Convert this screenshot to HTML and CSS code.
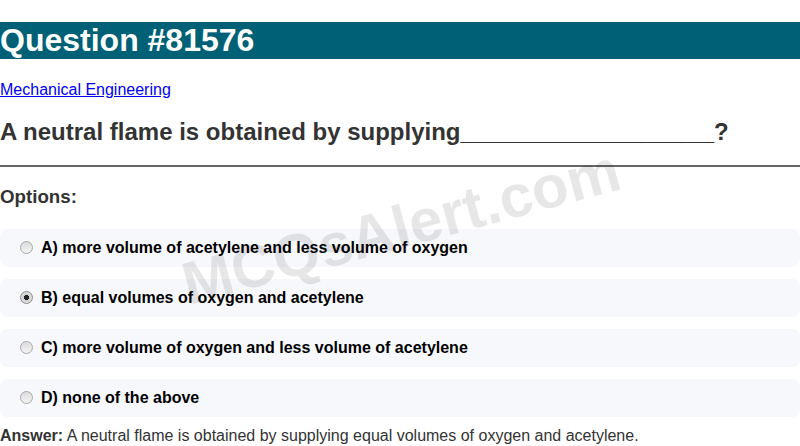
FILE: index.html
```html
<!DOCTYPE html>
<html>
<head>
<meta charset="utf-8">
<link rel="stylesheet" href="styles.css">
</head>
<body>
<h1 class="title">Question #81576</h1>
<p class="cat"><a href="#">Mechanical Engineering</a></p>
<h2 class="question">A neutral flame is obtained by supplying___________________?</h2>
<hr class="sep">
<h3 class="opts-head">Options:</h3>
<div class="options">
  <label class="option"><input class="radio" type="radio" name="q"><span>A) more volume of acetylene and less volume of oxygen</span></label>
  <label class="option"><input class="radio" type="radio" name="q" checked><span>B) equal volumes of oxygen and acetylene</span></label>
  <label class="option"><input class="radio" type="radio" name="q"><span>C) more volume of oxygen and less volume of acetylene</span></label>
  <label class="option"><input class="radio" type="radio" name="q"><span>D) none of the above</span></label>
</div>
<p class="answer"><strong>Answer:</strong> A neutral flame is obtained by supplying equal volumes of oxygen and acetylene.</p>
<div class="watermark">MCQsAlert.com</div>
</body>
</html>
```
FILE: styles.css
```css
html, body {
  margin: 0;
  padding: 0;
  background: #fff;
}
body {
  font-family: "Liberation Sans", Arial, sans-serif;
  color: #333;
  position: relative;
  overflow: hidden;
  height: 446px;
  padding-top: 1px;
  box-sizing: border-box;
}
.title {
  font-size: 32px;
  margin: 21px 0;
  background: #006076;
  color: #fff;
  font-weight: bold;
}
.cat {
  margin: 22px 0 15px;
  font-size: 16px;
}
.cat a {
  color: #0000ee;
}
.question {
  font-size: 24px;
  margin: 19px 0 18.5px;
  color: #333;
}
.sep {
  margin: 8px 0;
  border: none;
  border-top: 2px solid #666;
  height: 0;
}
.opts-head {
  font-size: 18.72px;
  margin: 19px 0 21.5px;
  color: #333;
}
.options {
  display: flex;
  flex-direction: column;
  gap: 12px;
}
.option {
  display: flex;
  align-items: center;
  height: 38px;
  box-sizing: border-box;
  background: #f7f8fc;
  border-radius: 8px;
  padding: 0 15px;
  font-size: 16px;
  font-weight: bold;
  color: #000;
}
.radio {
  appearance: none;
  -webkit-appearance: none;
  width: 13px;
  height: 13px;
  margin: 0 8px 0 5px;
  border-radius: 50%;
  border: 1px solid #a9a9a9;
  background: linear-gradient(#dcdcdc, #f4f4f4);
  box-sizing: border-box;
  position: relative;
  top: -1px;
  flex: none;
}
.radio:checked {
  background: radial-gradient(circle, #222 0, #222 2.3px, #cfcfcf 2.8px, #eeeeee 100%);
  border-color: #8a8a8a;
}
.answer {
  margin: 10px 0 0;
  font-size: 16px;
  color: #333;
}
.watermark {
  position: absolute;
  left: 401px;
  top: 227px;
  transform: translate(-50%, -50%) rotate(-15deg);
  font-size: 60px;
  font-weight: bold;
  color: rgba(0, 0, 0, 0.095);
  white-space: nowrap;
  pointer-events: none;
}
```
